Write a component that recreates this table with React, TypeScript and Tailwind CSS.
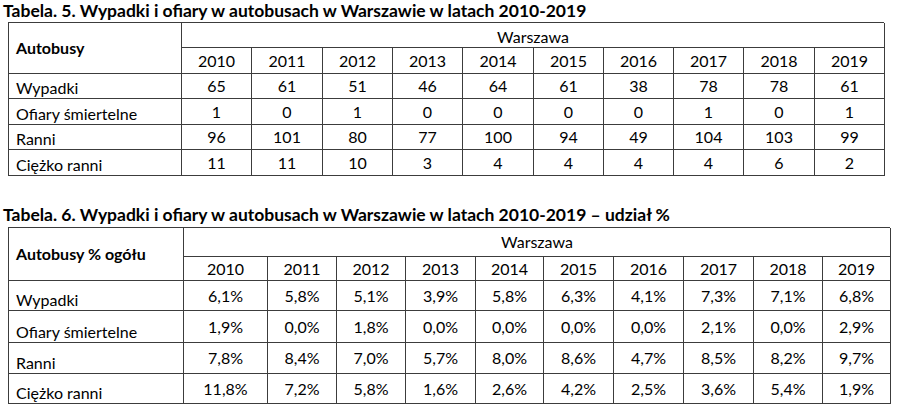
import React from 'react';

const years = ['2010', '2011', '2012', '2013', '2014', '2015', '2016', '2017', '2018', '2019'];

const counts: { label: string; values: string[] }[] = [
  { label: 'Wypadki', values: ['65', '61', '51', '46', '64', '61', '38', '78', '78', '61'] },
  { label: 'Ofiary śmiertelne', values: ['1', '0', '1', '0', '0', '0', '0', '1', '0', '1'] },
  { label: 'Ranni', values: ['96', '101', '80', '77', '100', '94', '49', '104', '103', '99'] },
  { label: 'Ciężko ranni', values: ['11', '11', '10', '3', '4', '4', '4', '4', '6', '2'] },
];

const shares: { label: string; values: string[] }[] = [
  { label: 'Wypadki', values: ['6,1%', '5,8%', '5,1%', '3,9%', '5,8%', '6,3%', '4,1%', '7,3%', '7,1%', '6,8%'] },
  { label: 'Ofiary śmiertelne', values: ['1,9%', '0,0%', '1,8%', '0,0%', '0,0%', '0,0%', '0,0%', '2,1%', '0,0%', '2,9%'] },
  { label: 'Ranni', values: ['7,8%', '8,4%', '7,0%', '5,7%', '8,0%', '8,6%', '4,7%', '8,5%', '8,2%', '9,7%'] },
  { label: 'Ciężko ranni', values: ['11,8%', '7,2%', '5,8%', '1,6%', '2,6%', '4,2%', '2,5%', '3,6%', '5,4%', '1,9%'] },
];

const cell = 'border-r border-b border-[#3c3c3c] flex items-center justify-center';
const label = 'border-r border-b border-[#3c3c3c] flex items-end pl-[7px] pb-[1px]';

export default function App() {
  return (
    <div
      className="w-[900px] h-[413px] bg-white text-black overflow-hidden text-[16px] leading-[18px]"
      style={{ fontFamily: 'Lato, "Noto Sans", sans-serif' }}
    >
      <h2 className="pl-[3px] h-[22px] text-[17.5px] leading-[21px] font-bold">
        Tabela. 5. Wypadki i ofiary w autobusach w Warszawie w latach 2010-2019
      </h2>

      {/* tabela 5 */}
      <div className="ml-[8px] w-[876px] grid grid-cols-[173px_70px_71px_70px_70px_71px_70px_70px_70px_71px_70px] grid-rows-[25px_26px_25px_26px_25px_26px] border-l border-t border-[#3c3c3c]">
        <div className="row-span-2 border-r border-b border-[#3c3c3c] flex items-center pl-[7px] font-bold">Autobusy</div>
        <div className={`${cell} col-span-10 pt-[3px]`}>Warszawa</div>
        {years.map((y) => (
          <div key={y} className={cell}>{y}</div>
        ))}
        {counts.map((row) => (
          <React.Fragment key={row.label}>
            <div className={label}>{row.label}</div>
            {row.values.map((v, i) => (
              <div key={i} className={cell}>{v}</div>
            ))}
          </React.Fragment>
        ))}
      </div>

      <h2 className="mt-[28px] pl-[3px] h-[23px] text-[17.5px] leading-[21px] font-bold">
        Tabela. 6. Wypadki i ofiary w autobusach w Warszawie w latach 2010-2019 – udział %
      </h2>

      {/* tabela 6 */}
      <div className="ml-[8px] w-[882px] grid grid-cols-[175px_84px_69px_69px_70px_68px_70px_70px_70px_69px_68px] grid-rows-[29px_24px_30px_32px_31px_30px] border-l border-t border-[#3c3c3c]">
        <div className="row-span-2 border-r border-b border-[#3c3c3c] flex items-center pl-[7px] font-bold">Autobusy % ogółu</div>
        <div className={`${cell} col-span-10`}>Warszawa</div>
        {years.map((y) => (
          <div key={y} className={cell}>{y}</div>
        ))}
        {shares.map((row) => (
          <React.Fragment key={row.label}>
            <div className={label}>{row.label}</div>
            {row.values.map((v, i) => (
              <div key={i} className={cell}>{v}</div>
            ))}
          </React.Fragment>
        ))}
      </div>
    </div>
  );
}
